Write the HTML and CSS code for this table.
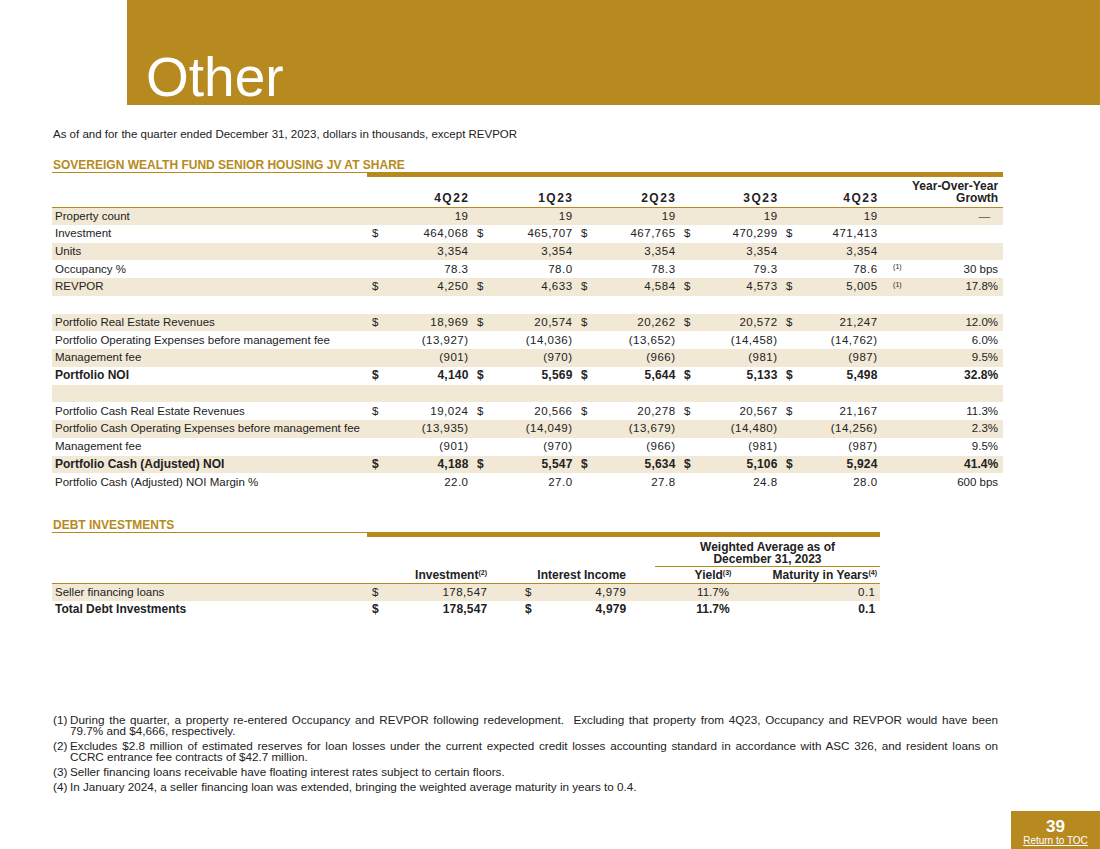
FILE: index.html
```html
<!DOCTYPE html>
<html lang="en">
<head>
<meta charset="utf-8">
<title>Other</title>
<link rel="stylesheet" href="styles.css">
</head>
<body>
<div class="page">
  <header class="banner"><h1>Other</h1></header>
  <main class="content">
    <p class="subtitle">As of and for the quarter ended December 31, 2023, dollars in thousands, except REVPOR</p>

    <section class="sec">
      <h2 class="sec-title">SOVEREIGN WEALTH FUND SENIOR HOUSING JV AT SHARE</h2>
      <div class="rule"><span class="thin"></span><span class="thick"></span></div>
      <table class="fin">
        <colgroup>
          <col class="c-lbl"><col class="c-d"><col class="c-n1"><col class="c-d"><col class="c-n2"><col class="c-d"><col class="c-n3"><col class="c-d"><col class="c-n4"><col class="c-d"><col class="c-n5"><col class="c-fn"><col class="c-g">
        </colgroup>
        <thead>
          <tr>
            <th></th>
            <th colspan="2" class="r q">4Q22</th>
            <th colspan="2" class="r q">1Q23</th>
            <th colspan="2" class="r q">2Q23</th>
            <th colspan="2" class="r q">3Q23</th>
            <th colspan="2" class="r q">4Q23</th>
            <th></th>
            <th class="g">Year-Over-Year<br>Growth</th>
          </tr>
        </thead>
        <tbody>
          <tr class="sh"><td class="lbl">Property count</td><td class="d"></td><td class="n">19</td><td class="d"></td><td class="n">19</td><td class="d"></td><td class="n">19</td><td class="d"></td><td class="n">19</td><td class="d"></td><td class="n">19</td><td class="fn"></td><td class="g dash">—</td></tr>
          <tr><td class="lbl">Investment</td><td class="d">$</td><td class="n">464,068</td><td class="d">$</td><td class="n">465,707</td><td class="d">$</td><td class="n">467,765</td><td class="d">$</td><td class="n">470,299</td><td class="d">$</td><td class="n">471,413</td><td class="fn"></td><td class="g"></td></tr>
          <tr class="sh"><td class="lbl">Units</td><td class="d"></td><td class="n">3,354</td><td class="d"></td><td class="n">3,354</td><td class="d"></td><td class="n">3,354</td><td class="d"></td><td class="n">3,354</td><td class="d"></td><td class="n">3,354</td><td class="fn"></td><td class="g"></td></tr>
          <tr><td class="lbl">Occupancy %</td><td class="d"></td><td class="n">78.3</td><td class="d"></td><td class="n">78.0</td><td class="d"></td><td class="n">78.3</td><td class="d"></td><td class="n">79.3</td><td class="d"></td><td class="n">78.6</td><td class="fn"><span>(1)</span></td><td class="g">30 bps</td></tr>
          <tr class="sh"><td class="lbl">REVPOR</td><td class="d">$</td><td class="n">4,250</td><td class="d">$</td><td class="n">4,633</td><td class="d">$</td><td class="n">4,584</td><td class="d">$</td><td class="n">4,573</td><td class="d">$</td><td class="n">5,005</td><td class="fn"><span>(1)</span></td><td class="g">17.8%</td></tr>
          <tr><td class="lbl"></td><td class="d"></td><td class="n"></td><td class="d"></td><td class="n"></td><td class="d"></td><td class="n"></td><td class="d"></td><td class="n"></td><td class="d"></td><td class="n"></td><td class="fn"></td><td class="g"></td></tr>
          <tr class="sh"><td class="lbl">Portfolio Real Estate Revenues</td><td class="d">$</td><td class="n">18,969</td><td class="d">$</td><td class="n">20,574</td><td class="d">$</td><td class="n">20,262</td><td class="d">$</td><td class="n">20,572</td><td class="d">$</td><td class="n">21,247</td><td class="fn"></td><td class="g">12.0%</td></tr>
          <tr><td class="lbl">Portfolio Operating Expenses before management fee</td><td class="d"></td><td class="n">(13,927)</td><td class="d"></td><td class="n">(14,036)</td><td class="d"></td><td class="n">(13,652)</td><td class="d"></td><td class="n">(14,458)</td><td class="d"></td><td class="n">(14,762)</td><td class="fn"></td><td class="g">6.0%</td></tr>
          <tr class="sh"><td class="lbl">Management fee</td><td class="d"></td><td class="n">(901)</td><td class="d"></td><td class="n">(970)</td><td class="d"></td><td class="n">(966)</td><td class="d"></td><td class="n">(981)</td><td class="d"></td><td class="n">(987)</td><td class="fn"></td><td class="g">9.5%</td></tr>
          <tr class="b"><td class="lbl">Portfolio NOI</td><td class="d">$</td><td class="n">4,140</td><td class="d">$</td><td class="n">5,569</td><td class="d">$</td><td class="n">5,644</td><td class="d">$</td><td class="n">5,133</td><td class="d">$</td><td class="n">5,498</td><td class="fn"></td><td class="g">32.8%</td></tr>
          <tr class="sh"><td class="lbl"></td><td class="d"></td><td class="n"></td><td class="d"></td><td class="n"></td><td class="d"></td><td class="n"></td><td class="d"></td><td class="n"></td><td class="d"></td><td class="n"></td><td class="fn"></td><td class="g"></td></tr>
          <tr><td class="lbl">Portfolio Cash Real Estate Revenues</td><td class="d">$</td><td class="n">19,024</td><td class="d">$</td><td class="n">20,566</td><td class="d">$</td><td class="n">20,278</td><td class="d">$</td><td class="n">20,567</td><td class="d">$</td><td class="n">21,167</td><td class="fn"></td><td class="g">11.3%</td></tr>
          <tr class="sh"><td class="lbl">Portfolio Cash Operating Expenses before management fee</td><td class="d"></td><td class="n">(13,935)</td><td class="d"></td><td class="n">(14,049)</td><td class="d"></td><td class="n">(13,679)</td><td class="d"></td><td class="n">(14,480)</td><td class="d"></td><td class="n">(14,256)</td><td class="fn"></td><td class="g">2.3%</td></tr>
          <tr><td class="lbl">Management fee</td><td class="d"></td><td class="n">(901)</td><td class="d"></td><td class="n">(970)</td><td class="d"></td><td class="n">(966)</td><td class="d"></td><td class="n">(981)</td><td class="d"></td><td class="n">(987)</td><td class="fn"></td><td class="g">9.5%</td></tr>
          <tr class="sh b"><td class="lbl">Portfolio Cash (Adjusted) NOI</td><td class="d">$</td><td class="n">4,188</td><td class="d">$</td><td class="n">5,547</td><td class="d">$</td><td class="n">5,634</td><td class="d">$</td><td class="n">5,106</td><td class="d">$</td><td class="n">5,924</td><td class="fn"></td><td class="g">41.4%</td></tr>
          <tr><td class="lbl">Portfolio Cash (Adjusted) NOI Margin %</td><td class="d"></td><td class="n">22.0</td><td class="d"></td><td class="n">27.0</td><td class="d"></td><td class="n">27.8</td><td class="d"></td><td class="n">24.8</td><td class="d"></td><td class="n">28.0</td><td class="fn"></td><td class="g">600 bps</td></tr>
        </tbody>
      </table>
    </section>

    <section class="sec debt">
      <h2 class="sec-title">DEBT INVESTMENTS</h2>
      <div class="rule"><span class="thin"></span><span class="thick"></span></div>
      <table class="dt">
        <colgroup>
          <col class="k-lbl"><col class="k-d1"><col class="k-n1"><col class="k-d2"><col class="k-n2"><col class="k-gap"><col class="k-y"><col class="k-m">
        </colgroup>
        <thead>
          <tr class="h1">
            <th colspan="6"></th>
            <th colspan="2" class="wa">Weighted Average as of<br>December 31, 2023</th>
          </tr>
          <tr class="h2">
            <th></th>
            <th colspan="2" class="r inv">Investment<sup>(2)</sup></th>
            <th colspan="2" class="r inc">Interest Income</th>
            <th></th>
            <th class="c">Yield<sup>(3)</sup></th>
            <th class="r mat">Maturity in Years<sup>(4)</sup></th>
          </tr>
        </thead>
        <tbody>
          <tr class="sh"><td class="lbl">Seller financing loans</td><td class="d">$</td><td class="n n1">178,547</td><td class="d d2">$</td><td class="n">4,979</td><td></td><td class="c">11.7%</td><td class="n n3">0.1</td></tr>
          <tr class="b"><td class="lbl">Total Debt Investments</td><td class="d">$</td><td class="n n1">178,547</td><td class="d d2">$</td><td class="n">4,979</td><td></td><td class="c">11.7%</td><td class="n n3">0.1</td></tr>
        </tbody>
      </table>
    </section>

    <ol class="notes">
      <li class="note"><span class="k">(1)</span><span class="t"><span class="j">During the quarter, a property re-entered Occupancy and REVPOR following redevelopment.&nbsp; Excluding that property from 4Q23, Occupancy and REVPOR would have been</span><span class="l">79.7% and $4,666, respectively.</span></span></li>
      <li class="note"><span class="k">(2)</span><span class="t"><span class="j">Excludes $2.8 million of estimated reserves for loan losses under the current expected credit losses accounting standard in accordance with ASC 326, and resident loans on</span><span class="l">CCRC entrance fee contracts of $42.7 million.</span></span></li>
      <li class="note"><span class="k">(3)</span><span class="t"><span class="l">Seller financing loans receivable have floating interest rates subject to certain floors.</span></span></li>
      <li class="note"><span class="k">(4)</span><span class="t"><span class="l">In January 2024, a seller financing loan was extended, bringing the weighted average maturity in years to 0.4.</span></span></li>
    </ol>
  </main>

  <div class="badge">
    <span class="pg">39</span>
    <a class="toc" href="#">Return to TOC</a>
  </div>
</div>
</body>
</html>
```

FILE: styles.css
```css
* {
  box-sizing: border-box;
  margin: 0;
  padding: 0;
}

html,
body {
  width: 1100px;
  height: 849px;
  overflow: hidden;
  background: #ffffff;
}

body {
  font-family: "Liberation Sans", Arial, sans-serif;
  color: #222222;
}

.page {
  position: relative;
  width: 1100px;
  height: 849px;
}

/* Banner */
.banner {
  margin-left: 127px;
  height: 105px;
  background: #b78a20;
  display: flex;
  align-items: flex-end;
  padding-left: 19px;
}

.banner h1 {
  font-weight: normal;
  font-size: 55px;
  line-height: 55px;
  color: #ffffff;
}

/* Content */
.content {
  padding-left: 52px;
}

.subtitle {
  font-size: 11.5px;
  line-height: 13px;
  margin-top: 23px;
  padding-left: 1px;
}

.sec-title {
  font-size: 12px;
  line-height: 13px;
  font-weight: bold;
  color: #b78a20;
  margin-top: 18px;
  padding-left: 1px;
}

.debt .sec-title {
  margin-top: 28px;
}

.rule {
  display: flex;
  height: 5px;
  width: 951px;
}

.rule .thin {
  width: 315px;
  border-top: 1px solid #b78a20;
}

.rule .thick {
  flex: 1;
  background: #b78a20;
}

.debt .rule {
  width: 828px;
}

/* Tables */
table {
  border-collapse: collapse;
  table-layout: fixed;
  font-size: 11.5px;
}

th {
  font-weight: bold;
  font-size: 12px;
  vertical-align: bottom;
  white-space: nowrap;
}

td {
  padding: 0;
  line-height: 13px;
  white-space: nowrap;
  vertical-align: middle;
}

tr.sh td {
  background: #f1e8d5;
}

tr.b td {
  font-weight: bold;
  font-size: 12px;
}

td.lbl {
  padding-left: 3px;
}

td.d {
  padding-left: 7px;
}

td.n {
  text-align: right;
  padding-right: 1.5px;
  letter-spacing: 0.5px;
}

tr.b td.n {
  letter-spacing: 0.2px;
}

th.r {
  text-align: right;
  padding-right: 2px;
}

th.q {
  letter-spacing: 1.5px;
  padding-right: 0.5px;
}

.c {
  text-align: center;
}

/* Main financial table */
.fin {
  width: 951px;
}

.fin .c-lbl { width: 313px; }
.fin .c-d { width: 20px; }
.fin .c-n1 { width: 85px; }
.fin .c-n2 { width: 84px; }
.fin .c-n3 { width: 83px; }
.fin .c-n4 { width: 82px; }
.fin .c-n5 { width: 80px; }
.fin .c-fn { width: 26px; }
.fin .c-g { width: 98px; }

.fin thead th {
  height: 30px;
  line-height: 12.5px;
  padding-bottom: 2px;
  border-bottom: 1px solid #b78a20;
}

.fin th.g {
  text-align: right;
  padding-right: 5px;
}

.fin tbody tr {
  height: 17.75px;
}

.fin td.g {
  text-align: right;
  padding-right: 5px;
}

.fin td.dash {
  padding-right: 13px;
  color: #555555;
}

.fin td.fn {
  padding-left: 14px;
  font-size: 7px;
  line-height: 8px;
}

.fin td.fn span {
  position: relative;
  top: -2px;
}

/* Debt table */
.dt {
  width: 828px;
}

.dt .k-lbl { width: 313px; }
.dt .k-d1 { width: 20px; }
.dt .k-n1 { width: 105px; }
.dt .k-d2 { width: 50px; }
.dt .k-n2 { width: 88px; }
.dt .k-gap { width: 27px; }
.dt .k-y { width: 116px; }
.dt .k-m { width: 109px; }

.dt tr.h1 th {
  height: 29px;
  line-height: 12px;
  padding-bottom: 1px;
}

.dt th.wa {
  text-align: center;
  border-bottom: 1px solid #b78a20;
}

.dt tr.h2 th {
  height: 17px;
  line-height: 13px;
  padding-bottom: 1px;
  border-bottom: 1px solid #b78a20;
}

.dt th.inv {
  padding-right: 3px;
}

.dt th.mat {
  padding-right: 3px;
}

.dt sup {
  font-size: 7px;
  line-height: 0;
  vertical-align: 4px;
}

.dt tbody tr {
  height: 17.75px;
}

.dt td.n1 {
  padding-right: 2.5px;
}

.dt td.d2 {
  padding-left: 35px;
}

.dt td.n3 {
  padding-right: 4.5px;
}

/* Footnotes */
.notes {
  list-style: none;
  margin-top: 95px;
  width: 946px;
  font-size: 11.7px;
  line-height: 11px;
}

.note {
  display: flex;
  margin-bottom: 4px;
}

.note .k {
  flex: none;
  width: 18px;
  padding-left: 1px;
}

.note .t {
  flex: 1;
}

.note .j {
  display: block;
  text-align: justify;
  text-align-last: justify;
}

.note .l {
  display: block;
}

/* Page badge */
.badge {
  position: absolute;
  left: 1011px;
  top: 811px;
  width: 89px;
  height: 38px;
  background: #b78a20;
  color: #ffffff;
  display: flex;
  flex-direction: column;
  align-items: center;
  padding-top: 7px;
}

.badge .pg {
  font-size: 17px;
  line-height: 17px;
  font-weight: bold;
}

.badge .toc {
  font-size: 10px;
  line-height: 11px;
  color: #ffffff;
  text-decoration: underline;
}
```
